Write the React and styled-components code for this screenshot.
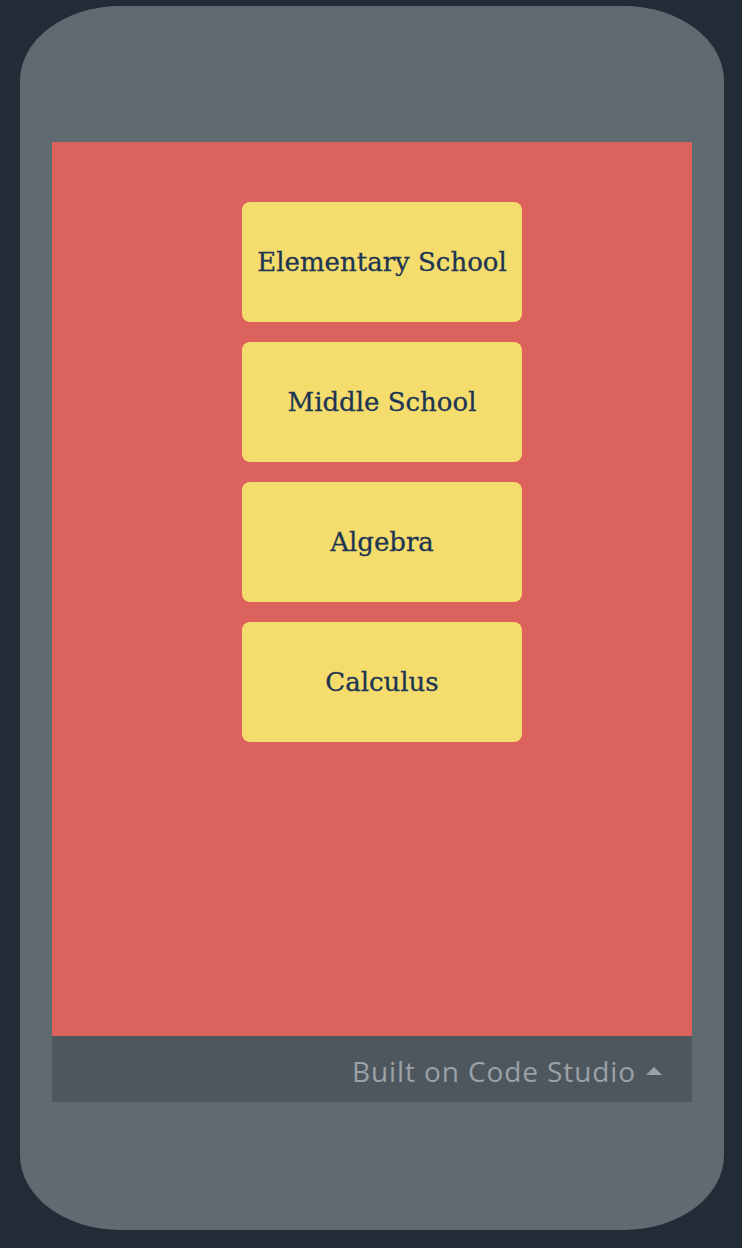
import React from "react";
import styled, { createGlobalStyle } from "styled-components";

const GlobalStyle = createGlobalStyle`
  html, body {
    margin: 0;
    padding: 0;
    background: #222b36;
  }
`;

const levels = ["Elementary School", "Middle School", "Algebra", "Calculus"];

function App() {
  return (
    <>
      <GlobalStyle />
      <Page>
        <Phone>
          <Screen>
            <Menu>
              {levels.map((label) => (
                <LevelButton key={label}>{label}</LevelButton>
              ))}
            </Menu>
          </Screen>
          <Footer>
            Built on Code Studio
            <Caret />
          </Footer>
        </Phone>
      </Page>
    </>
  );
}

const Page = styled.div`
  width: 742px;
  height: 1248px;
  padding: 6px 18px 18px 20px;
  box-sizing: border-box;
  background: #222b36;
`;

const Phone = styled.div`
  width: 704px;
  height: 1224px;
  box-sizing: border-box;
  padding: 136px 32px 0 32px;
  background: #5f6a71;
  border-radius: 100px / 75px;
  display: flex;
  flex-direction: column;
`;

const Screen = styled.div`
  height: 894px;
  background: #dc625e;
  padding: 60px 0 0 190px;
  box-sizing: border-box;
  display: flex;
  justify-content: flex-start;
`;

const Menu = styled.div`
  display: flex;
  flex-direction: column;
  gap: 20px;
`;

const LevelButton = styled.button`
  width: 280px;
  height: 120px;
  border: none;
  border-radius: 8px;
  background: #f4dd6c;
  color: #1d3552;
  font-family: "DejaVu Serif", Georgia, serif;
  font-size: 26px;
  padding: 0;
  cursor: pointer;
  -webkit-text-stroke: 0.3px #1d3552;
`;

const Footer = styled.div`
  height: 66px;
  box-sizing: border-box;
  padding: 4px 30px 0 0;
  background: #4f575e;
  color: #9aa1a7;
  font-family: "Open Sans", "Liberation Sans", sans-serif;
  font-size: 28px;
  letter-spacing: 0.9px;
  display: flex;
  align-items: center;
  justify-content: flex-end;
  gap: 10px;
`;

const Caret = styled.span`
  width: 0;
  height: 0;
  border-left: 8px solid transparent;
  border-right: 8px solid transparent;
  border-bottom: 8px solid #9aa1a7;
`;

export default App;
